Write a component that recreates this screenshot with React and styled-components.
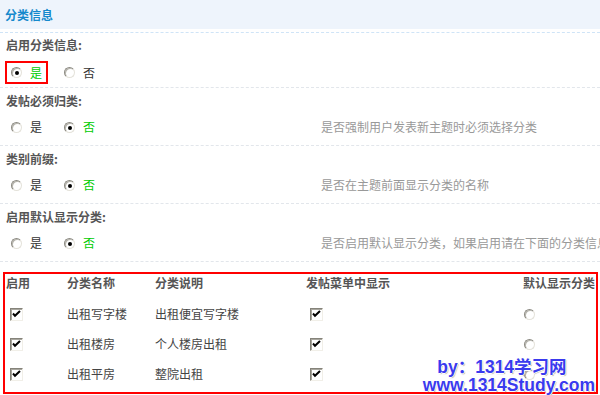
import React from "react";
import styled, { createGlobalStyle } from "styled-components";

const Global = createGlobalStyle`
  html, body { margin: 0; padding: 0; background: #fff; }
  body { font-family: "Noto Sans CJK SC", "Liberation Sans", sans-serif; font-size: 12px; color: #444; }
`;

const Page = styled.div`
  position: relative;
  width: 600px;
  height: 395px;
  overflow: hidden;
`;

const Header = styled.div`
  height: 29px;
  background: #eef4fc;
  display: flex;
  align-items: center;
  padding-left: 5px;
  margin-bottom: 3px;
`;

const Title = styled.span`
  font-weight: bold;
  font-size: 12px;
  color: #1589cc;
  line-height: 16px;
`;

const HeaderRule = styled.div`
  border-top: 1px dashed #cfe4f7;
`;

const Section = styled.div`
  display: flex;
  flex-direction: column;
  padding: ${(p) => (p.$first ? "4px 0 4px" : "5px 0 7px")};
  border-bottom: 1px dashed #e2e6eb;
`;

const Label = styled.div`
  font-weight: bold;
  color: #555;
  line-height: 16px;
  height: 16px;
  padding-left: 6px;
`;

const OptionRow = styled.div`
  display: grid;
  grid-template-columns: 321px 1fr;
  align-items: center;
  height: 22px;
  margin-top: ${(p) => (p.$first ? "8px" : "7px")};
`;

const Options = styled.div`
  display: flex;
  align-items: center;
  padding-left: 5px;
`;

const Highlight = styled.span`
  display: inline-flex;
  align-items: center;
  border: 2px solid #ff0000;
  box-sizing: border-box;
  height: 23px;
  padding: 0 4px;
  margin-right: 10px;
`;

const Choice = styled.span`
  display: inline-flex;
  align-items: center;
  padding: 0 6px;
  margin-right: ${(p) => (p.$gap ? "10px" : "0")};
`;

const RadioDot = styled.span`
  position: relative;
  display: inline-block;
  flex: none;
  width: 11px;
  height: 11px;
  box-sizing: border-box;
  border-radius: 50%;
  border: 1px solid;
  border-color: #8c8a82 #e4e2da #e4e2da #8c8a82;
  background: #fff;
  box-shadow: inset 1px 1px 0 #b8b6ae;
  margin-right: ${(p) => p.$mr || "8px"};
  margin-left: ${(p) => p.$ml || "0"};
  &::after {
    content: "";
    display: ${(p) => (p.$on ? "block" : "none")};
    position: absolute;
    left: 3px;
    top: 3px;
    width: 4px;
    height: 4px;
    border-radius: 50%;
    background: #000;
  }
`;

const OptText = styled.span`
  line-height: 16px;
  color: ${(p) => (p.$on ? "#00cc00" : "#333")};
`;

const Hint = styled.span`
  color: #999;
  line-height: 16px;
  white-space: nowrap;
  overflow: hidden;
`;

const TableBox = styled.div`
  margin: 10px 2px 0 3px;
  border: 2px solid #ff0000;
  display: grid;
  grid-template-columns: 61px 88px 151px 213px 1fr;
  grid-template-rows: 25px 30px 30px 30px;
  padding-bottom: 3px;
`;

const Th = styled.div`
  font-weight: bold;
  color: #555;
  line-height: 16px;
  padding: 1px 1px 0 1px;
  text-align: ${(p) => (p.$right ? "right" : "left")};
  white-space: nowrap;
`;

const Td = styled.div`
  display: flex;
  align-items: center;
  padding-left: 1px;
  line-height: 16px;
  color: #444;
  white-space: nowrap;
`;

const CheckBox = styled.span`
  display: inline-flex;
  align-items: center;
  justify-content: center;
  width: 13px;
  height: 13px;
  box-sizing: border-box;
  border: 1px solid;
  border-color: #85837a #f1efe8 #f1efe8 #85837a;
  box-shadow: inset 1px 1px 0 #a8a69e;
  background: #fff;
  margin-left: 4px;
`;

const Watermark = styled.div`
  position: absolute;
  right: 5px;
  bottom: 1px;
  display: flex;
  flex-direction: column;
  align-items: center;
  font-family: "Liberation Sans", "Noto Sans CJK SC", sans-serif;
  font-weight: bold;
  font-size: 17.5px;
  line-height: 17.5px;
  color: #3a3aee;
  text-shadow: 1px 0 0 #fff, -1px 0 0 #fff, 0 1px 0 #fff, 0 -1px 0 #fff,
    1px 1px 1px #999, -1px -1px 0 #fff;
  pointer-events: none;
`;

const WmLine = styled.span`
  padding-right: ${(p) => p.$pr || "0"};
`;

const Check = () => (
  <svg width="9" height="8" viewBox="0 0 9 8">
    <path d="M1 3.5 L3 5.8 L8 1" fill="none" stroke="#000" strokeWidth="2" />
  </svg>
);

const Radio = ({ on, ...rest }) => <RadioDot $on={on} {...rest} />;

const YesNo = ({ yes }) => (
  <Options>
    <Choice $gap>
      <Radio on={yes} />
      <OptText $on={yes}>是</OptText>
    </Choice>
    <Choice>
      <Radio on={!yes} />
      <OptText $on={!yes}>否</OptText>
    </Choice>
  </Options>
);

const rows = [
  ["出租写字楼", "出租便宜写字楼"],
  ["出租楼房", "个人楼房出租"],
  ["出租平房", "整院出租"],
];

export default function App() {
  return (
    <Page>
      <Global />
      <Header>
        <Title>分类信息</Title>
      </Header>
      <HeaderRule />

      <Section $first>
        <Label>启用分类信息:</Label>
        <OptionRow $first>
          <Options>
            <Highlight>
              <Radio on />
              <OptText $on>是</OptText>
            </Highlight>
            <Choice>
              <Radio />
              <OptText>否</OptText>
            </Choice>
          </Options>
        </OptionRow>
      </Section>

      <Section>
        <Label>发帖必须归类:</Label>
        <OptionRow>
          <YesNo yes={false} />
          <Hint>是否强制用户发表新主题时必须选择分类</Hint>
        </OptionRow>
      </Section>

      <Section>
        <Label>类别前缀:</Label>
        <OptionRow>
          <YesNo yes={false} />
          <Hint>是否在主题前面显示分类的名称</Hint>
        </OptionRow>
      </Section>

      <Section>
        <Label>启用默认显示分类:</Label>
        <OptionRow>
          <YesNo yes={false} />
          <Hint>是否启用默认显示分类，如果启用请在下面的分类信息中设置</Hint>
        </OptionRow>
      </Section>

      <TableBox>
        <Th>启用</Th>
        <Th>分类名称</Th>
        <Th>分类说明</Th>
        <Th>发帖菜单中显示</Th>
        <Th $right>默认显示分类</Th>
        {rows.map(([name, desc]) => (
          <React.Fragment key={name}>
            <Td>
              <CheckBox>
                <Check />
              </CheckBox>
            </Td>
            <Td>{name}</Td>
            <Td>{desc}</Td>
            <Td>
              <CheckBox>
                <Check />
              </CheckBox>
            </Td>
            <Td>
              <Radio $ml="5px" />
            </Td>
          </React.Fragment>
        ))}
      </TableBox>

      <Watermark>
        <WmLine $pr="14px">by：1314学习网</WmLine>
        <WmLine>www.1314Study.com</WmLine>
      </Watermark>
    </Page>
  );
}
